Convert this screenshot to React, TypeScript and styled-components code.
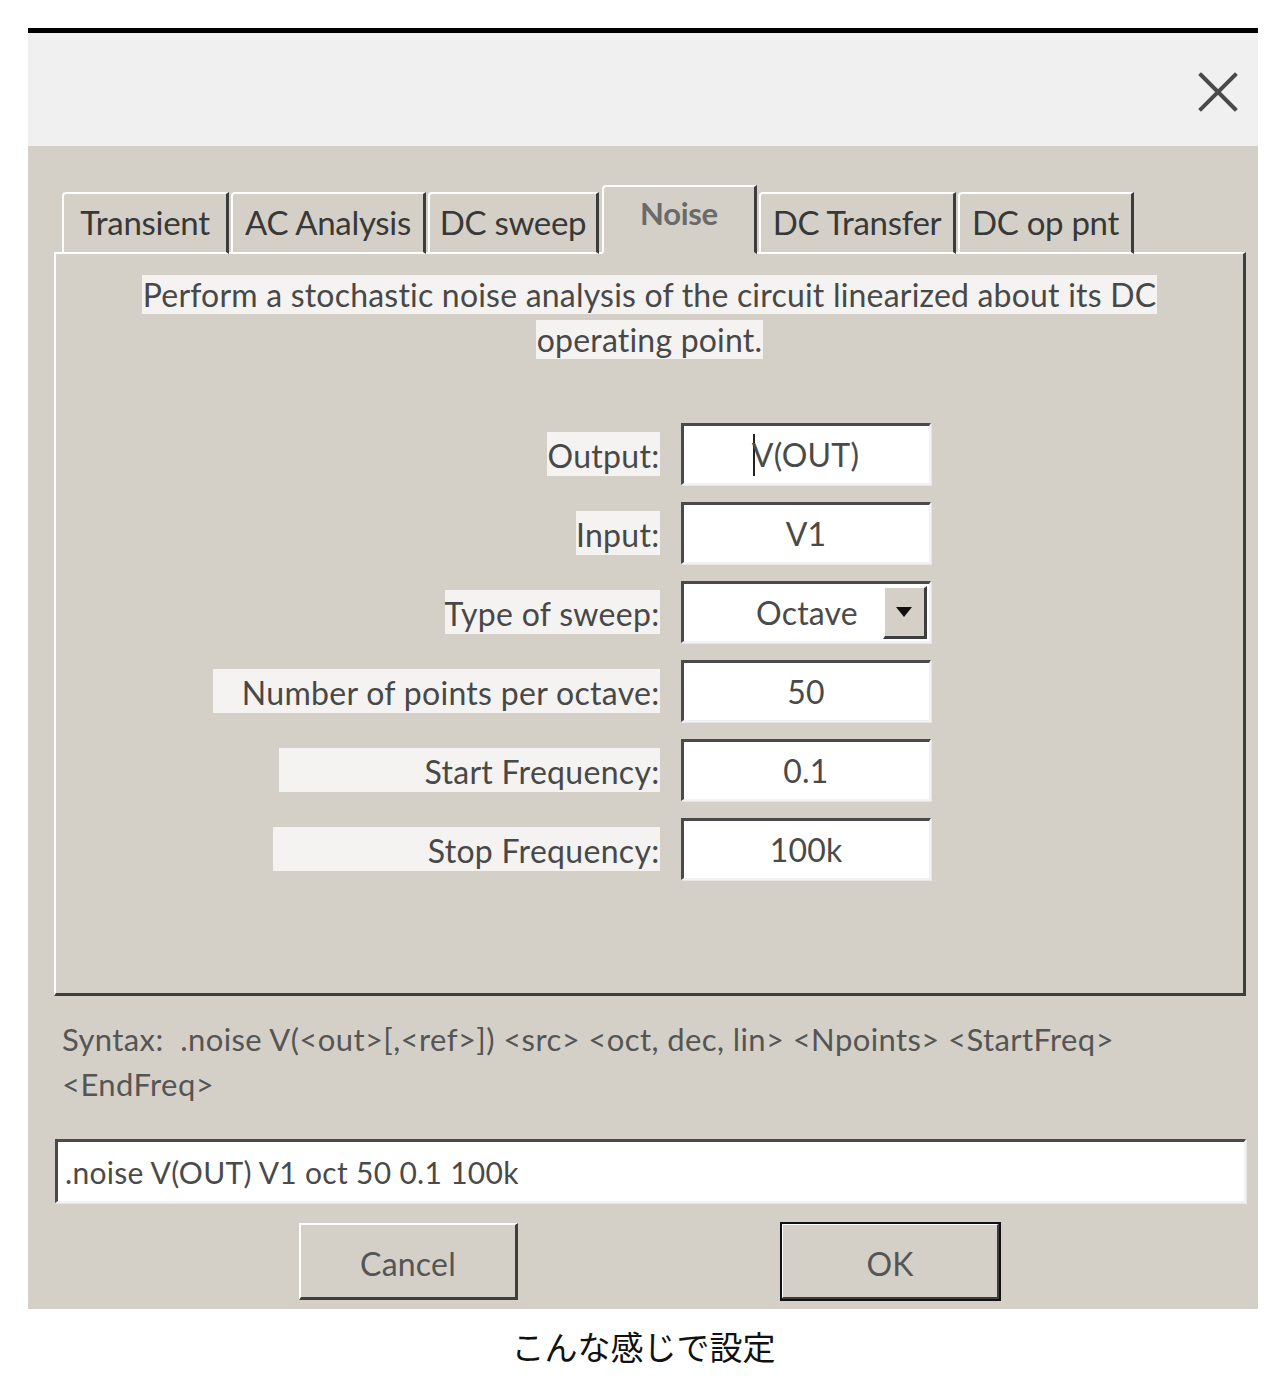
import styled, { createGlobalStyle, css } from "styled-components";

const GlobalStyle = createGlobalStyle`
  html, body {
    margin: 0;
    padding: 0;
    background: #ffffff;
  }
  body {
    font-family: Lato, "Noto Sans", "Liberation Sans", sans-serif;
  }
`;

const tabs = [
  { label: "Transient", width: 167 },
  { label: "AC Analysis", width: 195 },
  { label: "DC sweep", width: 171 },
  { label: "Noise", width: 155, active: true },
  { label: "DC Transfer", width: 197 },
  { label: "DC op pnt", width: 176 },
];

const fields = [
  { label: "Output:", value: "V(OUT)", cursor: true },
  { label: "Input:", value: "V1" },
  { label: "Type of sweep:", value: "Octave", select: true },
  { label: "Number of points per octave:", value: "50", boxWidth: 447 },
  { label: "Start Frequency:", value: "0.1", boxWidth: 381 },
  { label: "Stop Frequency:", value: "100k", boxWidth: 387 },
];

const App = () => {
  return (
    <Page>
      <GlobalStyle />
      <Window>
        <TitleBar>
          <CloseButton aria-label="close">
            <svg width="40" height="40" viewBox="0 0 40 40">
              <path
                d="M3 3 L37 37 M37 3 L3 37"
                stroke="#4a4a4a"
                strokeWidth="4"
                strokeLinecap="square"
              />
            </svg>
          </CloseButton>
        </TitleBar>
        <Body>
          <TabRow>
            {tabs.map((t) => (
              <Tab key={t.label} $width={t.width} $active={!!t.active}>
                {t.label}
              </Tab>
            ))}
          </TabRow>
          <Panel>
            <Description>
              <Highlight>
                Perform a stochastic noise analysis of the circuit linearized
                about its DC
              </Highlight>
              <br />
              <Highlight>operating point.</Highlight>
            </Description>
            <Form>
              {fields.map((f) => (
                <FieldRow key={f.label}>
                  <LabelCell>
                    <Label $width={f.boxWidth}>{f.label}</Label>
                  </LabelCell>
                  {f.select ? (
                    <SelectBox>
                      <SelectValue>{f.value}</SelectValue>
                      <DropButton>
                        <svg width="18" height="12" viewBox="0 0 18 12">
                          <path d="M1 1 H17 L9 11 Z" fill="#111" />
                        </svg>
                      </DropButton>
                    </SelectBox>
                  ) : (
                    <InputBox>
                      {f.cursor && <Caret />}
                      {f.value}
                    </InputBox>
                  )}
                </FieldRow>
              ))}
            </Form>
          </Panel>
          <Syntax>
            Syntax:&nbsp; .noise V(&lt;out&gt;[,&lt;ref&gt;]) &lt;src&gt;
            &lt;oct, dec, lin&gt; &lt;Npoints&gt; &lt;StartFreq&gt;
            <br />
            &lt;EndFreq&gt;
          </Syntax>
          <CommandInput>.noise V(OUT) V1 oct 50 0.1 100k</CommandInput>
          <ButtonRow>
            <DialogButton>Cancel</DialogButton>
            <DialogButton $default>OK</DialogButton>
          </ButtonRow>
        </Body>
      </Window>
      <Caption>こんな感じで設定</Caption>
    </Page>
  );
};

export default App;

const Page = styled.div`
  width: 1287px;
  padding-top: 28px;
  display: flex;
  flex-direction: column;
`;

const Window = styled.div`
  width: 1230px;
  margin-left: 28px;
  border-top: 5px solid #000;
  display: flex;
  flex-direction: column;
`;

const TitleBar = styled.div`
  height: 113px;
  background: #f0f0f0;
  display: flex;
  align-items: center;
  justify-content: flex-end;
  padding-right: 20px;
`;

const CloseButton = styled.div`
  width: 40px;
  height: 40px;
  margin-top: 5px;
  display: flex;
`;

const Body = styled.div`
  background: #d4d0c8;
  padding: 41px 12px 9px 26px;
  display: flex;
  flex-direction: column;
  color: #484848;
  font-size: 32px;
  letter-spacing: 0.2px;
`;

const TabRow = styled.div`
  display: flex;
  align-items: flex-end;
  gap: 2px;
  padding-left: 8px;
  height: 67px;
  margin-bottom: -2px;
  position: relative;
  z-index: 1;
`;

const Tab = styled.div<{ $width: number; $active: boolean }>`
  width: ${(p) => p.$width}px;
  box-sizing: border-box;
  height: 62px;
  border-top: 2px solid #ffffff;
  border-left: 2px solid #ffffff;
  border-right: 3px solid #3c3c3c;
  border-top-left-radius: 4px;
  border-bottom: 2px solid #ffffff;
  display: flex;
  align-items: center;
  justify-content: center;
  color: #383838;
  font-size: 33px;
  letter-spacing: -0.3px;
  padding-bottom: 2px;
  ${(p) =>
    p.$active &&
    css`
      height: 69px;
      border-bottom: 2px solid #d4d0c8;
      color: #6a6a6a;
      font-weight: 700;
      font-size: 31px;
      padding-bottom: 14px;
      margin-left: 1px;
    `}
`;

const Panel = styled.div`
  height: 744px;
  box-sizing: border-box;
  border-top: 2px solid #ffffff;
  border-left: 2px solid #ffffff;
  border-right: 3px solid #3e3e3e;
  border-bottom: 3px solid #3e3e3e;
  display: flex;
  flex-direction: column;
  align-items: center;
  padding-top: 18px;
`;

const Description = styled.div`
  width: 1100px;
  text-align: center;
  line-height: 45px;
`;

const Highlight = styled.span`
  background: #f4f3f1;
  padding: 0 1px;
`;

const Form = styled.div`
  margin-top: 61px;
  width: 1188px;
  display: flex;
  flex-direction: column;
  gap: 17px;
`;

const FieldRow = styled.div`
  display: grid;
  grid-template-columns: 604px 250px;
  column-gap: 21px;
  align-items: center;
`;

const LabelCell = styled.div`
  display: flex;
  justify-content: flex-end;
`;

const Label = styled.div<{ $width?: number }>`
  background: #f4f3f1;
  height: 44px;
  line-height: 48px;
  text-align: right;
  box-sizing: border-box;
  letter-spacing: 0.3px;
  ${(p) => (p.$width ? `width: ${p.$width}px;` : "")}
`;

const fieldBevel = css`
  height: 62px;
  box-sizing: border-box;
  background: #ffffff;
  border-top: 3px solid #4a4a4a;
  border-left: 3px solid #4a4a4a;
  border-right: 2px solid #f2f2f2;
  border-bottom: 2px solid #f2f2f2;
  box-shadow: 1px 1px 0 #e8e6e2;
`;

const InputBox = styled.div`
  ${fieldBevel};
  display: flex;
  align-items: center;
  justify-content: center;
  color: #4a4a4a;
  position: relative;
`;

const Caret = styled.span`
  display: inline-block;
  width: 2px;
  height: 42px;
  background: #222;
  margin-right: -3px;
`;

const SelectBox = styled.div`
  ${fieldBevel};
  display: flex;
  align-items: stretch;
  padding: 2px 2px 2px 0;
`;

const SelectValue = styled.div`
  flex: 1;
  display: flex;
  align-items: center;
  justify-content: center;
  padding-left: 48px;
  color: #4a4a4a;
`;

const DropButton = styled.div`
  width: 44px;
  box-sizing: border-box;
  background: #d4d0c8;
  border-top: 2px solid #ffffff;
  border-left: 2px solid #ffffff;
  border-right: 3px solid #3e3e3e;
  border-bottom: 3px solid #3e3e3e;
  display: flex;
  align-items: center;
  justify-content: center;
`;

const Syntax = styled.div`
  margin-top: 21px;
  padding-left: 8px;
  font-size: 31px;
  letter-spacing: 0.4px;
  line-height: 45px;
  color: #555;
`;

const CommandInput = styled.div`
  ${fieldBevel};
  height: 64px;
  margin-top: 32px;
  margin-left: 1px;
  display: flex;
  align-items: center;
  padding-left: 7px;
  font-size: 30px;
  letter-spacing: 0.3px;
  color: #4a4a4a;
`;

const ButtonRow = styled.div`
  display: flex;
  gap: 263px;
  padding-left: 245px;
  margin-top: 20px;
`;

const DialogButton = styled.div<{ $default?: boolean }>`
  width: 219px;
  height: 77px;
  box-sizing: border-box;
  border-top: 2px solid #ffffff;
  border-left: 2px solid #ffffff;
  border-right: 3px solid #3e3e3e;
  border-bottom: 3px solid #3e3e3e;
  display: flex;
  align-items: center;
  justify-content: center;
  color: #555;
  padding-top: 4px;
  ${(p) =>
    p.$default &&
    css`
      outline: 2px solid #111;
      outline-offset: -1px;
    `}
`;

const Caption = styled.div`
  margin-top: 13px;
  text-align: center;
  font-family: "Noto Sans CJK JP", "Noto Sans", sans-serif;
  font-size: 33px;
  color: #111;
  letter-spacing: 0;
`;
